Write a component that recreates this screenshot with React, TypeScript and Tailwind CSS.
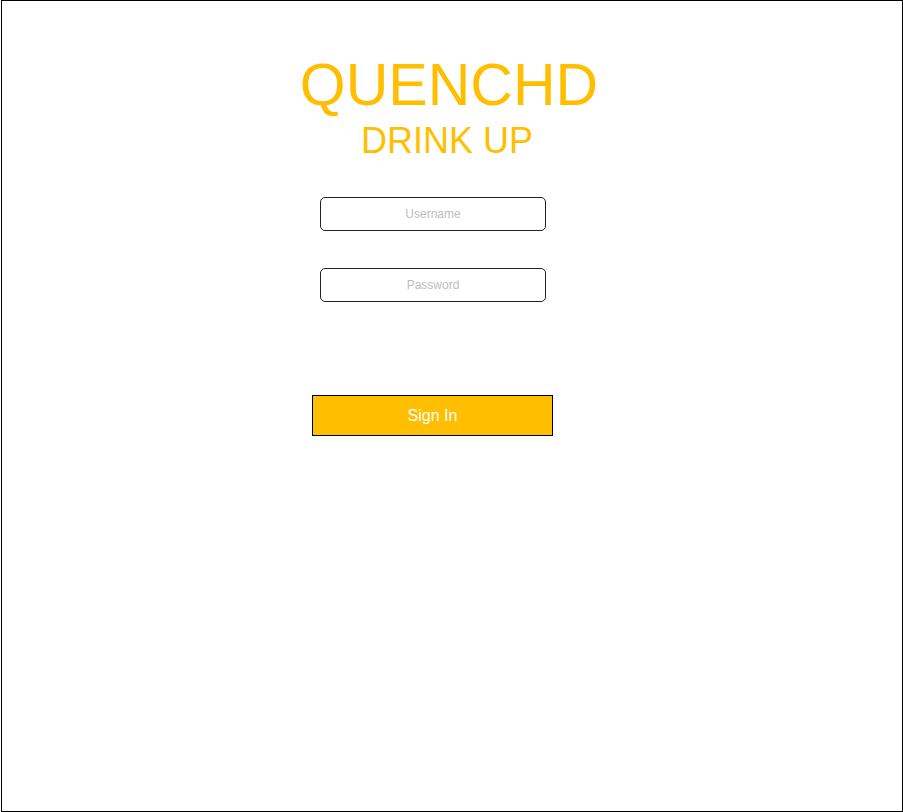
export default function App() {
  return (
    <div className="w-[903px] h-[812px] bg-white font-['Liberation_Sans',Arial,sans-serif]">
      <div className="ml-px h-full w-[902px] border border-black flex flex-col">
        <div className="flex flex-col items-center pt-[55px] pr-[6px] text-[#ffbf00] leading-none">
          <h1 className="text-[59px]">QUENCHD</h1>
          <h2 className="text-[36px] mt-[8px] mr-[4px]">DRINK UP</h2>
        </div>
        <form className="flex flex-col items-center pr-[38px] mt-[38px]" onSubmit={e => e.preventDefault()}>
          <input
            type="text"
            placeholder="Username"
            className="w-[226px] h-[34px] rounded-[5px] border border-[#222] text-center text-[12px] placeholder:text-[#bdbdbd] outline-none"
          />
          <input
            type="password"
            placeholder="Password"
            className="w-[226px] h-[34px] rounded-[5px] border border-[#222] text-center text-[12px] placeholder:text-[#bdbdbd] outline-none mt-[37px]"
          />
          <button
            type="submit"
            className="w-[241px] h-[41px] mt-[93px] ml-[-1px] bg-[#ffbf00] border border-black text-white text-[16px]"
          >
            Sign In
          </button>
        </form>
      </div>
    </div>
  )
}
